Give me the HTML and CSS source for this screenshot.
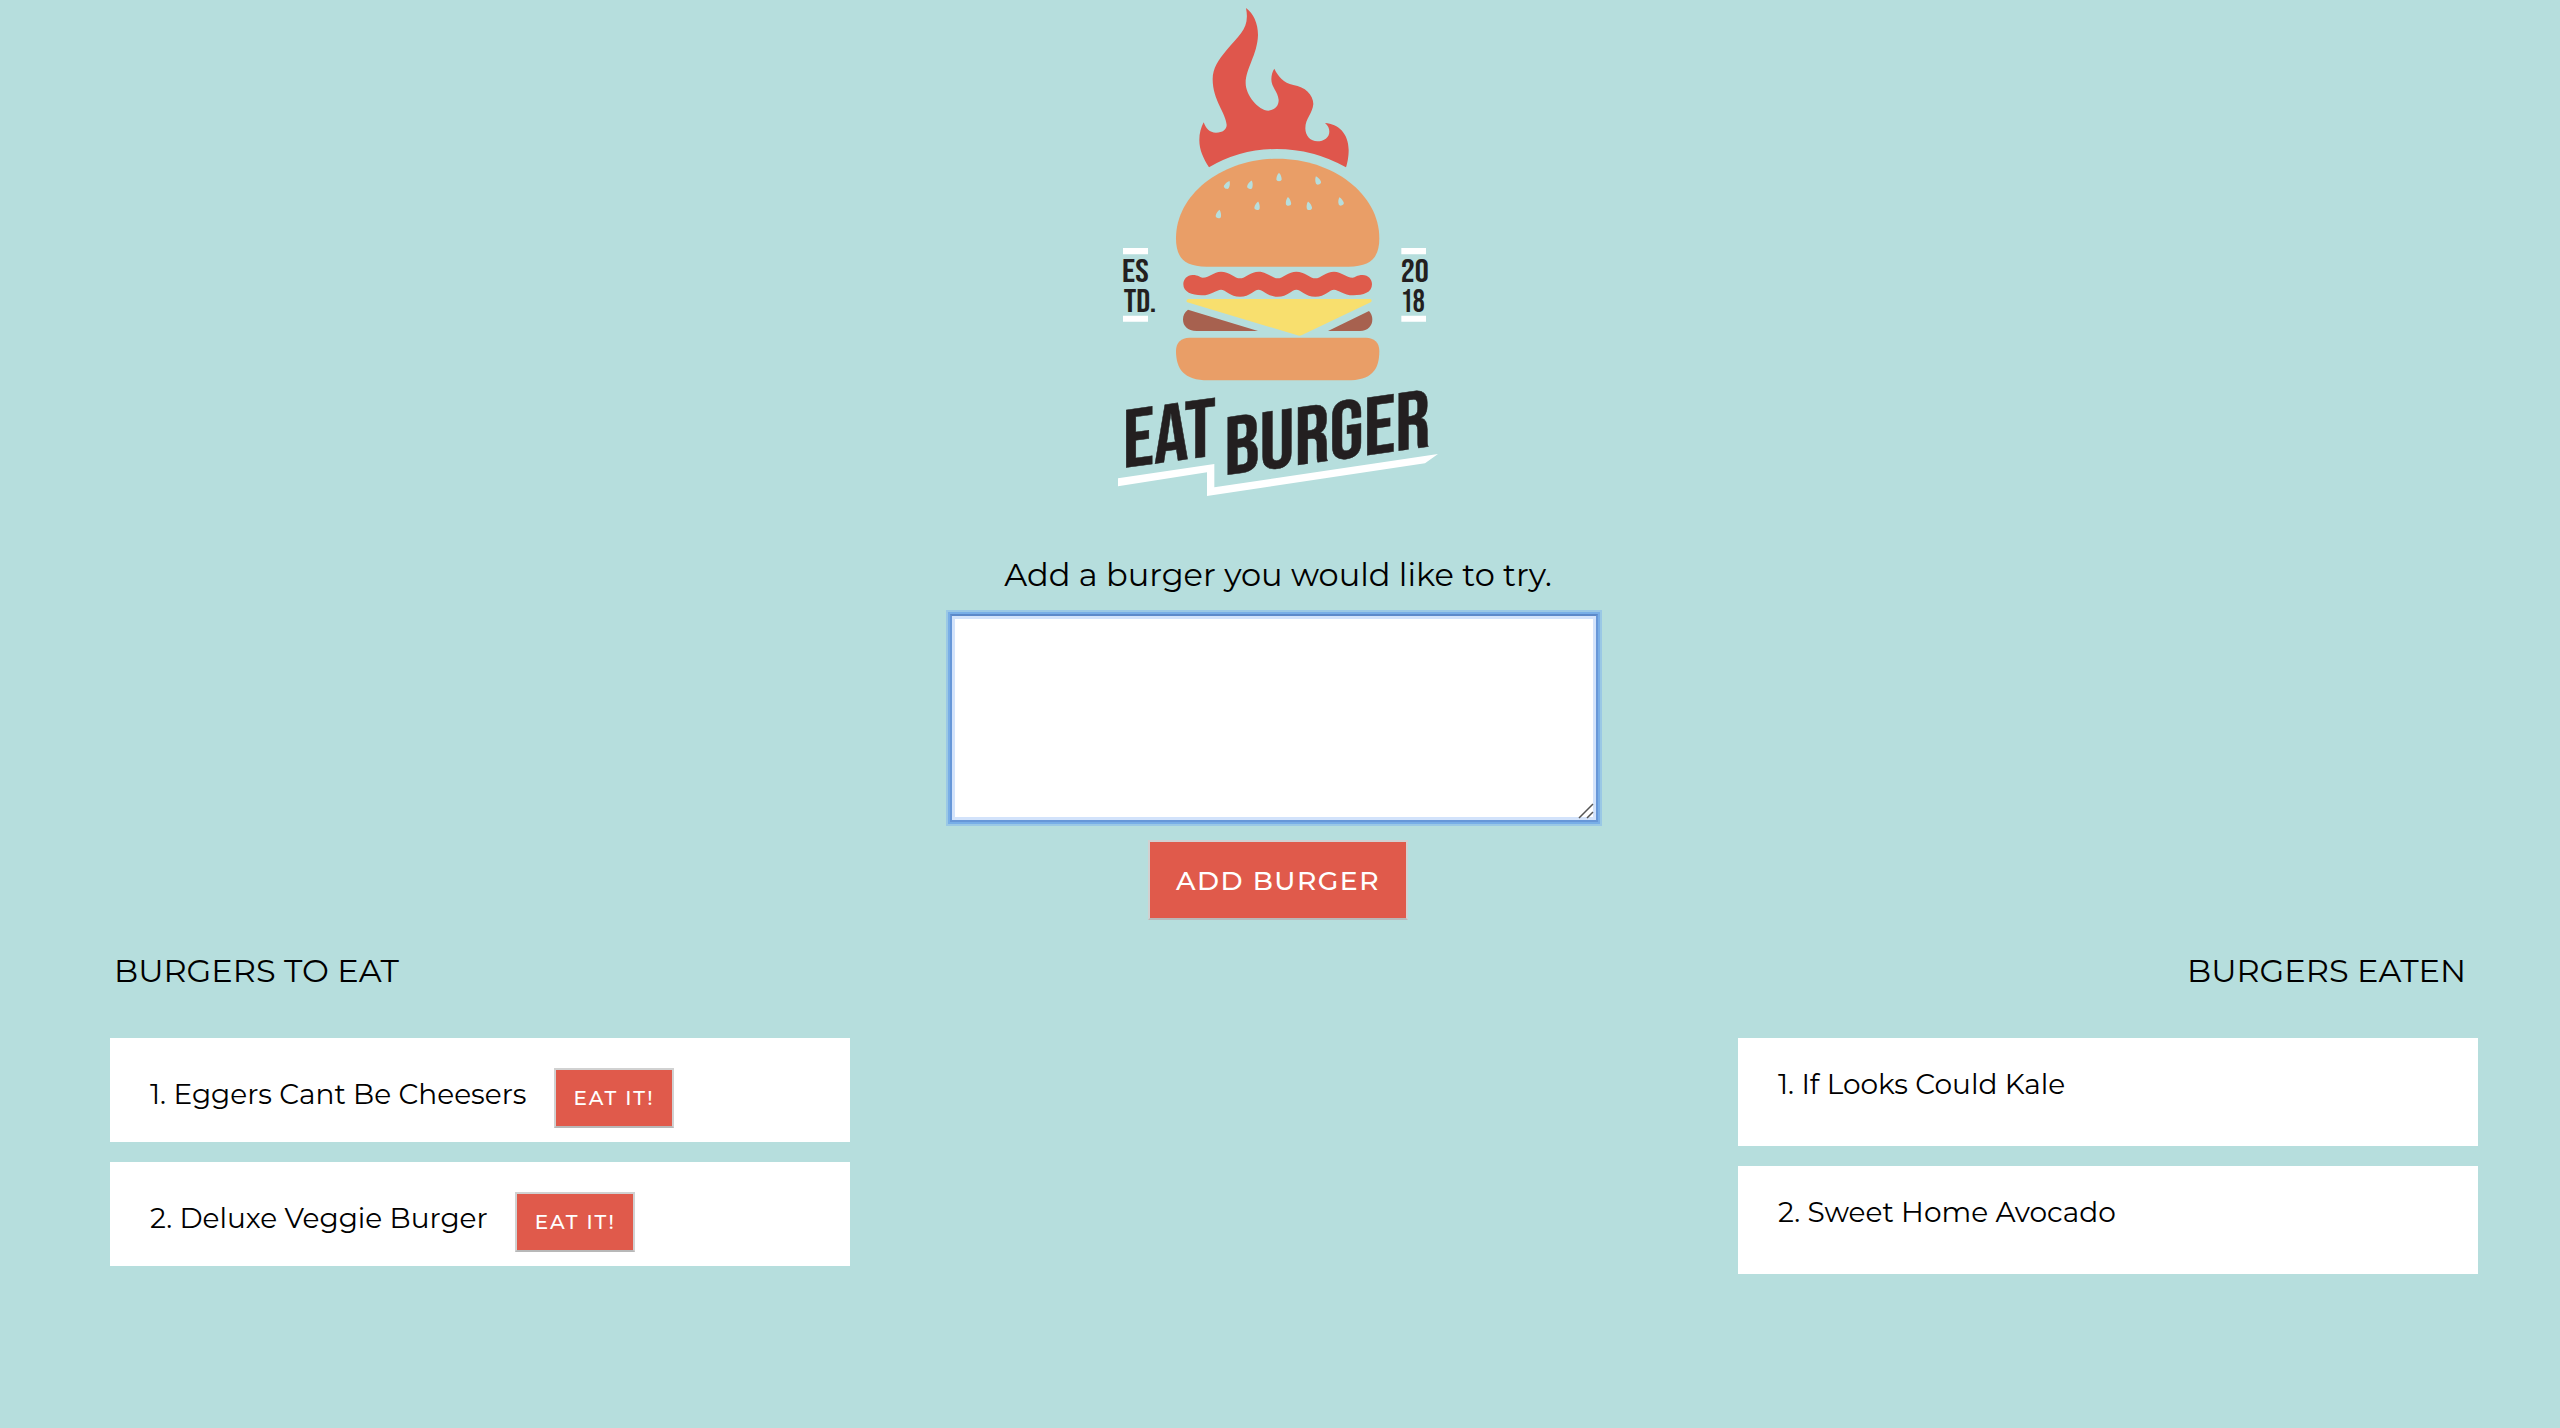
FILE: index.html
```html
<!DOCTYPE html>
<html lang="en">
<head>
<meta charset="utf-8">
<title>Eat Burger</title>
<link rel="stylesheet" href="styles.css">
</head>
<body>
<main class="page">
  <svg class="logo" viewBox="0 0 1068 1530" role="img" aria-label="Eat Burger, established 2018">
    <path class="flame" d="M438,24 C460,40 474,70 474,105 C472,165 437,205 437,250 C437,285 475,332 505,332 C525,330 536,318 536,300 C534,275 514,262 514,238 C514,225 518,213 523,206 C535,230 550,248 580,255 C615,260 640,285 640,312 C638,340 616,355 616,385 C616,408 632,424 652,424 C672,424 688,412 688,395 C688,385 684,377 675,369 C715,372 746,400 746,450 C746,470 742,490 738,502 Q640,447 530,447 Q420,447 327,502 C310,475 298,450 298,420 C298,400 303,382 311,367 C318,385 328,398 348,398 C368,398 380,388 380,375 C378,340 338,300 338,238 C338,205 355,180 380,150 C420,103 450,85 438,24 Z"/>
    <path class="bun" d="M228,715 C228,580 370,476 533,476 C696,476 838,580 838,715 C838,770 815,800 745,800 H320 C250,800 228,770 228,715 Z"/>
    <defs><path id="seed" d="M0,-14 C5,-9 8,-1 8,6 C8,14 -8,14 -8,6 C-8,-1 -5,-9 0,-14 Z"/></defs>
    <g class="seeds">
      <use href="#seed" transform="translate(382 555) rotate(28)"/>
      <use href="#seed" transform="translate(451 555) rotate(18)"/>
      <use href="#seed" transform="translate(537 532)"/>
      <use href="#seed" transform="translate(653 542) rotate(-22)"/>
      <use href="#seed" transform="translate(356 643) rotate(10)"/>
      <use href="#seed" transform="translate(472 618) rotate(10)"/>
      <use href="#seed" transform="translate(565 605) rotate(-5)"/>
      <use href="#seed" transform="translate(627 618) rotate(-12)"/>
      <use href="#seed" transform="translate(722 605) rotate(-16)"/>
    </g>
    <path class="ketchup" d="M278,825 C296,825 300,833 308,833 C330,833 340,815 363,815 C387,815 405,835 420,835 C435,835 453,815 476,815 C500,815 518,835 533,835 C548,835 566,815 589,815 C613,815 631,835 646,835 C661,835 679,815 702,815 C725,815 738,833 758,833 C766,833 770,825 788,825 C805,825 816,838 816,853 C816,878 790,886 760,886 C730,886 716,869 702,869 C688,869 676,890 646,890 C616,890 603,869 589,869 C575,869 563,890 533,890 C503,890 490,869 476,869 C462,869 450,890 420,890 C390,890 377,869 363,869 C349,869 335,886 305,886 C275,886 250,876 250,853 C250,838 261,825 278,825 Z"/>
    <path class="cheese" d="M264,897 H812 Q818,903 812,907 L606,1005 Q598,1009 590,1005 L262,907 Q256,902 264,897 Z"/>
    <path class="patty" d="M264,929 L474,993 H290 C262,993 249,978 249,958 C249,946 254,936 264,929 Z M807,933 L684,993 H780 C804,993 817,978 817,958 C817,948 813,940 807,933 Z"/>
    <path class="bun" d="M268,1013 H798 C822,1013 838,1028 838,1052 C838,1110 815,1141 740,1141 H325 C250,1141 228,1105 228,1052 C228,1028 244,1013 268,1013 Z"/>
    <path class="white" d="M69,744 H144 V763 H69 Z M69,947 H144 V965 H69 Z M904,744 H978 V763 H904 Z M904,947 H978 V965 H904 Z"/>
    <g class="small-type">
      <text x="66" y="847" textLength="80" lengthAdjust="spacingAndGlyphs">ES</text>
      <text x="71" y="936" textLength="98" lengthAdjust="spacingAndGlyphs">TD.</text>
      <text x="902" y="847" textLength="84" lengthAdjust="spacingAndGlyphs">20</text>
      <text x="902" y="936" textLength="72" lengthAdjust="spacingAndGlyphs">18</text>
    </g>
    <g class="big-type">
      <text transform="translate(68 1404) skewY(-7.8)" textLength="280" lengthAdjust="spacingAndGlyphs">EAT</text>
      <text transform="translate(373 1426) skewY(-8)" textLength="618" lengthAdjust="spacingAndGlyphs">BURGER</text>
    </g>
    <path class="white" d="M54,1435 L343,1392 V1462 L1014,1362 L975,1390 L321,1488 V1417 L54,1459 Z"/>
  </svg>

  <form class="add-form">
    <label class="prompt" for="burger">Add a burger you would like to try.</label>
    <div class="field">
      <textarea id="burger" class="input"></textarea>
      <svg class="grip" viewBox="0 0 16 16"><path d="M1 15 L15 1 M9 15 L15 9"/></svg>
    </div>
    <button class="btn btn-add" type="button">ADD BURGER</button>
  </form>

  <div class="lists">
    <section class="column">
      <h2 class="title">BURGERS TO EAT</h2>
      <ul class="cards">
        <li class="card todo"><span class="name">1. Eggers Cant Be Cheesers</span><button class="btn btn-eat" type="button">EAT IT!</button></li>
        <li class="card todo"><span class="name">2. Deluxe Veggie Burger</span><button class="btn btn-eat" type="button">EAT IT!</button></li>
      </ul>
    </section>
    <section class="column">
      <h2 class="title title-right">BURGERS EATEN</h2>
      <ul class="cards">
        <li class="card done"><span class="name">1. If Looks Could Kale</span></li>
        <li class="card done"><span class="name">2. Sweet Home Avocado</span></li>
      </ul>
    </section>
  </div>
</main>
</body>
</html>
```
FILE: styles.css
```css
* { box-sizing: border-box; }
body {
  margin: 0;
  background: #b6dedd;
  color: #000;
  font-family: Montserrat, Inter, sans-serif;
}
.page { width: 2556px; min-height: 1428px; }
.logo { display: block; width: 356px; height: 510px; margin: 0 auto; overflow: visible; }
.flame { fill: #df564c; }
.bun { fill: #e99e67; }
.seeds { fill: #b6dedd; }
.ketchup { fill: #df5b4b; }
.cheese { fill: #f8df6e; }
.patty { fill: #a7614f; }
.white { fill: #fff; }
.small-type, .big-type { fill: #231f20; font-family: "Bebas Neue", Roboto, sans-serif; font-weight: 400; }
.small-type { font-size: 95px; }
.big-type { font-size: 247px; stroke: #231f20; stroke-width: 1.5; }

.add-form { display: flex; flex-direction: column; align-items: center; padding-top: 45px; }
.prompt { font-size: 32px; line-height: 40px; height: 59px; }
.field { position: relative; width: 648px; height: 208px; margin-right: 8px; }
.input {
  display: block;
  width: 100%;
  height: 100%;
  border: 2px solid #6797d8;
  border-top-color: #5c89c9;
  outline: none;
  resize: none;
  background: #fff;
  box-shadow: inset 0 0 0 3px #d3e3fb, 0 0 0 2px #78aee7, 0 0 0 4px #9ac8e5;
}
.grip { position: absolute; right: 4px; bottom: 3px; width: 16px; height: 16px; fill: none; stroke: #555; stroke-width: 1.5; }
.btn {
  display: flex;
  align-items: center;
  justify-content: center;
  padding: 0;
  border: 2px solid #d1d1d1;
  border-bottom-color: #b8b8b8;
  background: #e05a4b;
  color: #fff;
  font-family: inherit;
  font-weight: 500;
}
.btn-add { width: 260px; height: 80px; margin-top: 18px; font-size: 26.67px; letter-spacing: 1.5px; }
.btn-eat { width: 120px; height: 60px; padding-left: 1px; font-size: 20px; letter-spacing: 1.8px; }

.lists { display: flex; justify-content: space-between; padding: 31px 78px 0 110px; }
.column { width: 740px; }
.title { margin: 0; padding: 0 4px; font-size: 32px; line-height: 40px; font-weight: 400; }
.title-right { text-align: right; padding-right: 12px; }
.cards { list-style: none; margin: 47px 0 0; padding: 0; display: flex; flex-direction: column; gap: 20px; }
.card { display: flex; background: #fff; padding: 0 40px; }
.name { font-size: 28px; line-height: 34px; }
.todo { height: 104px; padding-top: 30px; gap: 27px; }
.todo .name { padding-top: 9px; }
.done { height: 108px; padding-top: 29px; }
```
